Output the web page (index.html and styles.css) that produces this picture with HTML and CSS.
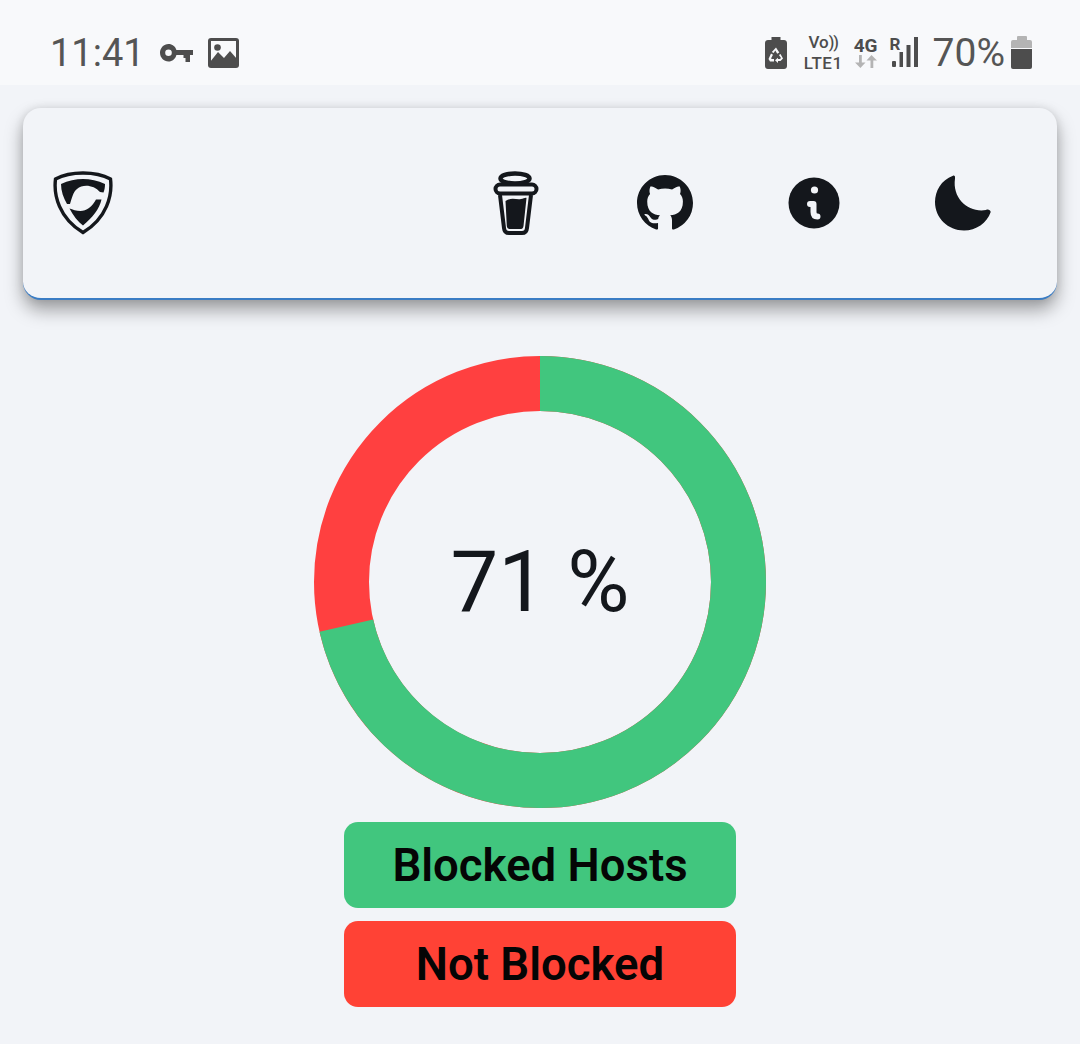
FILE: index.html
```html
<!DOCTYPE html>
<html lang="en">

<head>
    <meta charset="UTF-8">
    <meta name="viewport" content="width=device-width, initial-scale=1.0">
    <title>Blocked Hosts</title>
    <link rel="stylesheet" href="styles.css">
</head>

<body>
    <div class="status-bar">
        <span class="clock">11:41</span>
        <svg class="icon-key" width="33" height="18" viewBox="0 0 33 18">
            <path fill-rule="evenodd" d="M8.500 0C12.300 0 15.400 2.500 16.400 6H33V11H30V18H25.500V14H23.500V11H16.400C15.400 15 12.300 17.500 8.500 17.500C3.800 17.500 0 13.600 0 8.800C0 4 3.800 0 8.500 0ZM8.500 5.500A3.300 3.300 0 1 0 8.500 12.100A3.300 3.300 0 1 0 8.500 5.500Z" />
        </svg>
        <svg class="icon-image" width="31" height="30" viewBox="0 0 31 30">
            <rect width="31" height="30" rx="3" />
            <rect x="3" y="3" width="25" height="20" fill="#f8f9fb" />
            <circle cx="9.500" cy="9.500" r="3.300" />
            <path d="M2 24L10 14L16 20L22 13L29 21V26H2Z" />
        </svg>

        <div class="status-right">
            <svg class="icon-saver" width="22" height="32" viewBox="0 0 22 32">
                <path d="M6.500 0H15.500V3H19C20.700 3 22 4.300 22 6V29C22 30.700 20.700 32 19 32H3C1.300 32 0 30.700 0 29V6C0 4.300 1.300 3 3 3H6.500Z" />
                <path fill="#f8f9fb" d="M11 10.500L14.300 15.500L12.200 16.700L10.300 13.600L8.700 16.100L6.800 14.900ZM15.500 17L18 21.500L15.500 24H13V26L10 23.300L13 20.700V22H15L16 21L13.900 17.900ZM6 16.500L8 17.800L6 21.500L7 22H9V24.500H5L3.500 22Z" />
            </svg>
            <div class="volte">
                <span class="volte-top">Vo<span class="volte-waves">))</span></span>
                <span class="volte-bottom">LTE1</span>
            </div>
            <div class="network">
                <span>4G</span>
                <svg width="24" height="13" viewBox="0 0 24 13">
                    <path d="M5 0H7.800V7.500H11.500L6.400 13L1 7.500H5Z" />
                    <path d="M17.500 0L23 5.500H19.300V13H16.500V5.500H12.500Z" />
                </svg>
            </div>
            <div class="signal">
                <span class="roaming">R</span>
                <svg width="27" height="31" viewBox="0 0 27 31">
                    <rect x="1" y="24" width="4" height="6" rx="1" />
                    <rect x="8.500" y="15" width="3.500" height="15" />
                    <rect x="15.500" y="8" width="4" height="22" />
                    <rect x="23" y="0" width="4" height="30" />
                </svg>
            </div>
            <span class="battery-text">70%</span>
            <div class="battery">
                <div class="battery-cap"></div>
                <div class="battery-empty"></div>
                <div class="battery-level"></div>
            </div>
        </div>
    </div>

    <nav class="navbar">
        <svg class="logo" width="60" height="64" viewBox="0 0 60 64">
            <path class="logo-line" d="M30 2C40 2 50 4 57.500 8C59.500 24 54 47 30 61.500C6 47 0.500 24 2.500 8C10 4 20 2 30 2Z" />
            <path fill="#14171c" d="M8 13C15 9.500 23 8 30 8C37 8 45 9.500 52 13C52 16 51.500 19 50.500 21.500L47 21C41 14 30 12.500 24 18C20 21 19 27 17 33L14 33C10.500 27 8 20 8 13Z" />
            <path fill="#14171c" d="M16.500 37.500C22 39.500 30 42 36 37C39 35 41 32 43 28.500L48.500 28.500C46.500 38 39 47 30 54.500C25 50.500 20 44.500 16.500 37.500Z" />
        </svg>
        <div class="nav-links">
            <div class="nav-item">
                <svg width="46" height="64" viewBox="0 0 46 64">
                    <ellipse class="cup-lid" cx="22" cy="7.500" rx="14.500" ry="5" />
                    <rect class="cup-line" x="2.500" y="13.500" width="41" height="9" rx="4.500" />
                    <path class="cup-line" d="M7 24L11 57C11.300 60.500 13 62 16 62H29C32 62 33.700 60.500 34 57L38 24" />
                    <path d="M12.500 30C18 26 24 29 28 28C30.500 27.500 33 26 33.500 27L30.500 55C30.200 57.500 29 58 27 58H17C15 58 14 57 13.800 55Z" fill="#14171c" />
                </svg>
            </div>
            <div class="nav-item">
                <svg width="56" height="56" viewBox="0 0 16 16">
                    <path fill="#14171c" d="M8 0C3.580 0 0 3.580 0 8c0 3.540 2.290 6.530 5.470 7.590.400.070.550-.170.550-.380 0-.190-.010-.820-.010-1.490-2.010.370-2.530-.490-2.690-.940-.090-.230-.480-.940-.820-1.130-.280-.150-.680-.520-.010-.530.630-.010 1.080.580 1.230.820.720 1.210 1.870.870 2.330.660.070-.520.280-.870.510-1.070-1.780-.200-3.640-.890-3.640-3.950 0-.870.310-1.590.820-2.150-.080-.200-.360-1.020.080-2.120 0 0 .670-.210 2.200.820.640-.180 1.320-.270 2-.270.680 0 1.360.090 2 .270 1.530-1.040 2.200-.820 2.200-.820.440 1.100.160 1.920.080 2.120.510.560.820 1.270.820 2.150 0 3.070-1.870 3.750-3.650 3.950.290.250.540.730.540 1.480 0 1.070-.010 1.930-.010 2.200 0 .210.150.460.550.380A8.013 8.013 0 0016 8c0-4.420-3.580-8-8-8z" />
                </svg>
            </div>
            <div class="nav-item">
                <svg width="52" height="52" viewBox="0 0 52 52">
                    <circle cx="26" cy="26" r="25.500" fill="#14171c" />
                    <circle cx="26.500" cy="13" r="3.600" fill="#f2f4f8" />
                    <path class="info-stem" d="M22 27H25.500V35C25.500 38 27 39.500 29.500 39.500" />
                </svg>
            </div>
            <div class="nav-item">
                <svg width="56" height="56" viewBox="0 0 56 56">
                    <path fill="#14171c" d="M18 0.700C6 5 0 16 0 27C0 43 13 55.500 29 55.500C41 55.500 52 48 55.700 37C55.500 35 53 34 51 35C34 38 17 24 20 3.500C20.300 1.200 19.500 0.300 18 0.700Z" />
                </svg>
            </div>
        </div>
    </nav>

    <main class="content">
        <div class="chart">
            <svg width="452" height="452" viewBox="0 0 452 452">
                <circle class="ring ring-red" cx="226" cy="226" r="198.500" />
                <circle class="ring ring-green" cx="226" cy="226" r="198.500" stroke-dasharray="891 1247.200" transform="rotate(-90 226 226)" />
            </svg>
            <span class="chart-label">71 %</span>
        </div>
        <div class="legend legend-green">Blocked Hosts</div>
        <div class="legend legend-red">Not Blocked</div>
    </main>
</body>

</html>
```

FILE: styles.css
```css
* {
    box-sizing: border-box;
}

body {
    margin: 0;
    background-color: #f2f4f8;
    color: #14171c;
    font-family: Roboto, "Liberation Sans", sans-serif;
}

.status-bar {
    display: flex;
    align-items: center;
    height: 85px;
    padding: 20px 48px 0 50px;
    background-color: #f8f9fb;
    color: #4d4d4d;
    fill: #4d4d4d;
}

.clock {
    font-size: 38px;
    font-weight: 400;
    line-height: 46px;
    color: #555555;
}

.icon-key {
    margin-left: 15px;
}

.icon-image {
    margin-left: 15px;
}

.status-right {
    display: flex;
    align-items: center;
    margin-left: auto;
}

.volte {
    display: flex;
    flex-direction: column;
    align-items: center;
    margin-left: 17px;
    font-size: 17px;
    font-weight: 500;
    line-height: 20px;
}

.volte-bottom {
    letter-spacing: 0.5px;
}

.volte-waves {
    font-size: 16px;
    letter-spacing: -1px;
}

.network {
    display: flex;
    flex-direction: column;
    align-items: center;
    margin-left: 11px;
    font-size: 19px;
    font-weight: 700;
    line-height: 18px;
}

.network svg {
    fill: #b4b4b4;
}

.signal {
    position: relative;
    width: 29px;
    height: 31px;
    margin-left: 12px;
}

.signal svg {
    display: block;
    margin-left: 1px;
}

.roaming {
    position: absolute;
    top: -2px;
    left: 0;
    font-size: 17px;
    font-weight: 700;
    line-height: 18px;
}

.battery-text {
    margin-left: 14px;
    font-size: 39px;
    font-weight: 400;
    line-height: 46px;
    color: #555555;
}

.battery {
    display: flex;
    flex-direction: column;
    align-items: center;
    width: 21px;
    margin-left: 6px;
}

.battery-cap {
    width: 10px;
    height: 4px;
    background-color: #b4b4b4;
    border-radius: 1px 1px 0 0;
}

.battery-empty {
    width: 21px;
    height: 8px;
    background-color: #b4b4b4;
    border-radius: 2px 2px 0 0;
}

.battery-level {
    width: 21px;
    height: 20px;
    margin-top: 1px;
    background-color: #4d4d4d;
    border-radius: 0 0 2px 2px;
}

.navbar {
    display: flex;
    align-items: center;
    justify-content: space-between;
    height: 192px;
    margin: 23px 23px 0;
    padding: 0 20px 0 30px;
    background-color: #f2f4f8;
    border-bottom: 2px solid #3a7cc4;
    border-radius: 18px;
    box-shadow: 0 10px 18px rgba(0, 0, 0, 0.35), 0 0 10px rgba(0, 0, 0, 0.1);
}

.logo-line {
    fill: none;
    stroke: #14171c;
    stroke-width: 3.4;
}

.nav-links {
    display: flex;
}

.nav-item {
    display: flex;
    align-items: center;
    justify-content: center;
    width: 149px;
}

.nav-item svg {
    display: block;
}

.cup-line {
    fill: none;
    stroke: #14171c;
    stroke-width: 4;
}

.cup-lid {
    fill: none;
    stroke: #14171c;
    stroke-width: 4.5;
}

.info-stem {
    fill: none;
    stroke: #f2f4f8;
    stroke-width: 6;
    stroke-linecap: round;
    stroke-linejoin: round;
}

.content {
    display: flex;
    flex-direction: column;
    align-items: center;
    margin-top: 56px;
}

.chart {
    display: grid;
    place-items: center;
    width: 452px;
    height: 452px;
}

.chart svg,
.chart-label {
    grid-area: 1 / 1;
}

.ring {
    fill: none;
    stroke-width: 55;
}

.ring-red {
    stroke: #ff4040;
}

.ring-green {
    stroke: #41c67e;
}

.chart-label {
    font-size: 85px;
    font-weight: 400;
    line-height: 100px;
}

.legend {
    display: flex;
    align-items: center;
    justify-content: center;
    width: 392px;
    height: 86px;
    border-radius: 14px;
    color: #050505;
    font-size: 45.5px;
    font-weight: 600;
}

.legend-green {
    margin-top: 14px;
    background-color: #41c67e;
}

.legend-red {
    margin-top: 13px;
    background-color: #ff4235;
}
```
